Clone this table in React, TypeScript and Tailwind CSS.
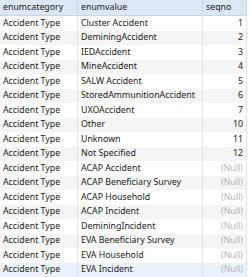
const rows: [string, string, number | null][] = [
  ["Accident Type", "Cluster Accident", 1],
  ["Accident Type", "DeminingAccident", 2],
  ["Accident Type", "IEDAccident", 3],
  ["Accident Type", "MineAccident", 4],
  ["Accident Type", "SALW Accident", 5],
  ["Accident Type", "StoredAmmunitionAccident", 6],
  ["Accident Type", "UXOAccident", 7],
  ["Accident Type", "Other", 10],
  ["Accident Type", "Unknown", 11],
  ["Accident Type", "Not Specified", 12],
  ["Accident Type", "ACAP Accident", null],
  ["Accident Type", "ACAP Beneficiary Survey", null],
  ["Accident Type", "ACAP Household", null],
  ["Accident Type", "ACAP Incident", null],
  ["Accident Type", "DeminingIncident", null],
  ["Accident Type", "EVA Beneficiary Survey", null],
  ["Accident Type", "EVA Household", null],
  ["Accident Type", "EVA Incident", null],
];

export default function App() {
  return (
    <div className="w-[250px] h-[277px] overflow-hidden bg-white font-['Noto_Sans',sans-serif] text-[8.8px] text-[#1a1a1a] whitespace-nowrap">
      <div className="w-[247px]">
        <div className="flex h-[16px] items-center bg-[#dce7f4] border-b border-[#c9d6e6]">
          <div className="w-[78px] h-full pl-[3px] flex items-center border-r border-[#c9d6e6]">enumcategory</div>
          <div className="w-[125px] h-full pl-[3px] flex items-center border-r border-[#c9d6e6]">enumvalue</div>
          <div className="w-[44px] h-full pl-[3px] flex items-center border-r border-[#c9d6e6]">seqno</div>
        </div>
        {rows.map(([cat, val, seq], i) => {
          const last = i === rows.length - 1;
          const bg = last ? "bg-[#eaf2fb]" : i % 2 === 0 ? "bg-white" : "bg-[#f5f5f5]";
          return (
            <div key={i} className={`flex h-[14.5px] items-center ${bg}`}>
              <div className="w-[78px] h-full pl-[3px] flex items-center border-r border-[#e3e3e3]">{cat}</div>
              <div className="w-[125px] h-full pl-[3px] flex items-center border-r border-[#e3e3e3] overflow-hidden">{val}</div>
              <div className="w-[44px] h-full pr-[3px] flex items-center justify-end border-r border-[#e3e3e3]">
                {seq === null ? <span className="text-[#b4b4b4]">(Null)</span> : seq}
              </div>
            </div>
          );
        })}
      </div>
    </div>
  );
}
